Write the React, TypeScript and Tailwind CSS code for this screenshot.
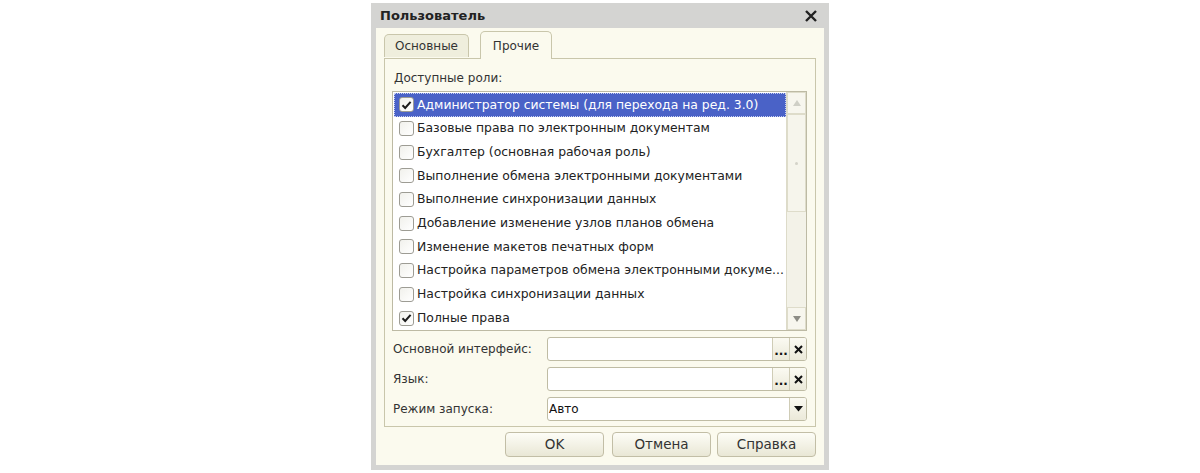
import React from 'react';

const roles = [
  { name: 'Администратор системы (для перехода на ред. 3.0)', checked: true },
  { name: 'Базовые права по электронным документам', checked: false },
  { name: 'Бухгалтер (основная рабочая роль)', checked: false },
  { name: 'Выполнение обмена электронными документами', checked: false },
  { name: 'Выполнение синхронизации данных', checked: false },
  { name: 'Добавление изменение узлов планов обмена', checked: false },
  { name: 'Изменение макетов печатных форм', checked: false },
  { name: 'Настройка параметров обмена электронными докуме...', checked: false },
  { name: 'Настройка синхронизации данных', checked: false },
  { name: 'Полные права', checked: true },
];

const CheckBox = ({ checked }: { checked: boolean }) => (
  <div className="w-[15px] h-[15px] shrink-0 rounded-[3px] border border-[#9d9c94] bg-gradient-to-br from-[#f1f1ec] to-white flex items-center justify-center">
    {checked && (
      <svg width="11" height="10" viewBox="0 0 11 10">
        <path d="M1.5 5.2 L4.2 8 L9.6 1.8" fill="none" stroke="#1c1c1c" strokeWidth="2" />
      </svg>
    )}
  </div>
);

const FieldButton = ({ children }: { children: React.ReactNode }) => (
  <div className="w-[17px] h-full flex items-center justify-center border-l border-[#cfccb6] bg-gradient-to-b from-[#fbfaf2] to-[#ebe9d9] text-[#111] text-[12px] font-bold">
    {children}
  </div>
);

const Field = ({ label, value, kind }: { label: string; value?: string; kind: 'pick' | 'select' }) => (
  <div className="flex items-center h-[24px]">
    <div className="w-[155px] pl-[1px] text-[#333]">{label}</div>
    <div className="w-[260px] h-full flex rounded-[3px] border border-[#bfbca4] bg-white overflow-hidden">
      <div className="flex-1 pl-[1px] flex items-center text-[#111]">{value}</div>
      {kind === 'pick' ? (
        <>
          <FieldButton>
            <span className="leading-none mt-[3px]">...</span>
          </FieldButton>
          <FieldButton>
            <svg width="9" height="9" viewBox="0 0 9 9">
              <path d="M1 1 L8 8 M8 1 L1 8" stroke="#111" strokeWidth="2" />
            </svg>
          </FieldButton>
        </>
      ) : (
        <FieldButton>
          <svg width="9" height="6" viewBox="0 0 9 6">
            <path d="M0 0 H9 L4.5 5.5 Z" fill="#111" />
          </svg>
        </FieldButton>
      )}
    </div>
  </div>
);

const DialogButton = ({ children }: { children: React.ReactNode }) => (
  <button className="w-[99px] h-[25px] rounded-[4px] border border-[#c2bea6] bg-gradient-to-b from-[#fdfdf7] to-[#e9e7d5] text-[#333] text-[13.5px]">
    {children}
  </button>
);

export default function App() {
  return (
    <div className="min-h-[473px] bg-white pt-[3px] text-[12px]" style={{ fontFamily: '"DejaVu Sans", sans-serif' }}>
      <div className="mx-auto w-[458px] bg-[#d4d4d2] px-[5px] pb-[5px]">
        <div className="h-[25px] flex items-center justify-between pl-[4px] pr-[7px]">
          <span className="font-bold text-[13px] text-[#222]">Пользователь</span>
          <svg width="12" height="12" viewBox="0 0 12 12">
            <path d="M1 1 L11 11 M11 1 L1 11" stroke="#222" strokeWidth="2.4" />
          </svg>
        </div>

        <div className="h-[437px] bg-[#fbfaee] px-[8px] pt-[3px]">
          <div className="flex items-end h-[27px] gap-[11px] relative z-10">
            <div className="w-[85px] h-[23px] mb-px rounded-t-[5px] border border-b-0 border-[#c9c6ab] bg-[#efeedd] flex items-center justify-center text-[#333]">
              Основные
            </div>
            <div className="w-[72px] h-[28px] -mb-px rounded-t-[5px] border border-b-0 border-[#c9c6ab] bg-[#fbfaee] flex items-center justify-center text-[#333]">
              Прочие
            </div>
          </div>

          <div className="h-[369px] border border-[#c9c6ab] pl-[7px] pr-[8px] pt-[10px]">
            <div className="h-[18px] flex items-center pl-[2px] text-[#333]">Доступные роли:</div>

            <div className="mt-[4px] h-[240px] border border-[#bdbaa4] bg-white flex">
              <div className="flex-1 pl-[1px] pt-px overflow-hidden text-[12.4px]">
                {roles.map((role, i) => (
                  <div
                    key={i}
                    className={`h-[23.7px] flex items-center gap-[3px] pl-[5px] ${
                      i === 0 ? 'bg-[#4a62c7] text-white outline-1 outline-dotted outline-[#c8d0f0] -outline-offset-1' : 'text-[#222]'
                    }`}
                  >
                    <CheckBox checked={role.checked} />
                    <span className="whitespace-nowrap">{role.name}</span>
                  </div>
                ))}
              </div>
              <div className="w-[20px] bg-[#f3f2e8] border-l border-[#dddbc9] flex flex-col">
                <div className="h-[22px] border border-[#dedcca] bg-[#f7f6ee] flex items-center justify-center">
                  <svg width="8" height="6" viewBox="0 0 8 6">
                    <path d="M4 0 L8 6 H0 Z" fill="#cfcfc6" />
                  </svg>
                </div>
                <div className="h-[98px] border border-[#dedcca] bg-[#f6f5ec] flex items-center justify-center">
                  <div className="w-[3px] h-[3px] rounded-full bg-[#d4d3c8]" />
                </div>
                <div className="flex-1" />
                <div className="h-[23px] border border-[#dedcca] bg-[#f7f6ee] flex items-center justify-center">
                  <svg width="8" height="6" viewBox="0 0 8 6">
                    <path d="M0 0 H8 L4 6 Z" fill="#8d8d86" />
                  </svg>
                </div>
              </div>
            </div>

            <div className="mt-[6px] flex flex-col gap-[6px]">
              <Field label="Основной интерфейс:" kind="pick" />
              <Field label="Язык:" kind="pick" />
              <Field label="Режим запуска:" value="Авто" kind="select" />
            </div>
          </div>

          <div className="mt-[5px] flex justify-end gap-[6px]">
            <div className="mr-[2px]">
              <DialogButton>OK</DialogButton>
            </div>
            <DialogButton>Отмена</DialogButton>
            <DialogButton>Справка</DialogButton>
          </div>
        </div>
      </div>
    </div>
  );
}
